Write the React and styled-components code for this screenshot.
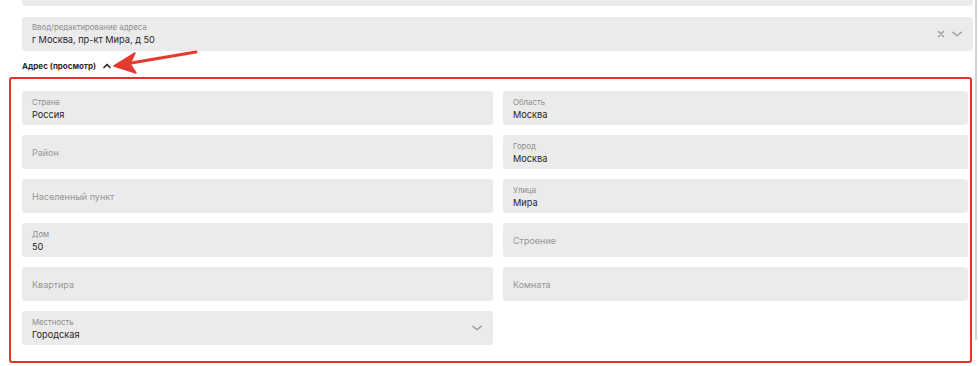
import React from 'react';
import styled, { createGlobalStyle } from 'styled-components';

const GlobalStyle = createGlobalStyle`
  html, body {
    margin: 0;
    padding: 0;
    background: #ffffff;
    font-family: Inter, "Noto Sans", "Liberation Sans", sans-serif;
  }
`;

const Page = styled.div`
  position: relative;
  display: flex;
  width: 979px;
  height: 366px;
  overflow: hidden;
  background: #ffffff;
`;

const Content = styled.div`
  width: 964px;
  padding-left: 9px;
  display: flex;
  flex-direction: column;
`;

const ScrollTrack = styled.div`
  width: 2px;
  height: 340px;
  margin-left: 2px;
  background: #d3d3d3;
`;

const TopStub = styled.div`
  height: 6px;
  margin-left: 13px;
  background: #ebebeb;
  border-radius: 0 0 3px 3px;
`;

const Field = styled.div`
  position: relative;
  box-sizing: border-box;
  height: 34px;
  padding: ${(p) => (p.$empty ? '0 10px' : '6px 10px 0')};
  background: #ebebeb;
  border-radius: 3px;
  display: flex;
  flex-direction: column;
  justify-content: ${(p) => (p.$empty ? 'center' : 'flex-start')};
`;

const AddressField = styled(Field)`
  margin: 11px 0 0 13px;
  padding-top: 5px;
`;

const FieldLabel = styled.span`
  font-size: 7.8px;
  line-height: 11px;
  color: #8d8d8d;
`;

const FieldValue = styled.span`
  font-size: 9.2px;
  line-height: 13px;
  color: #262626;
`;

const Placeholder = styled.span`
  font-size: 9px;
  color: #969696;
`;

const Actions = styled.div`
  position: absolute;
  right: 10px;
  top: 0;
  bottom: 0;
  display: flex;
  align-items: center;
  gap: 6px;
`;

const SectionTitle = styled.div`
  display: flex;
  align-items: center;
  gap: 6px;
  margin: 8px 0 0 13px;
  height: 14px;
  font-size: 8px;
  font-weight: 700;
  color: #2b2b2b;
`;

const Frame = styled.div`
  box-sizing: border-box;
  width: 963px;
  margin-top: 4px;
  padding: 12px 2px 16px 11px;
  border: 2px solid #e5322b;
  border-radius: 3px;
  display: grid;
  grid-template-columns: 471px 1fr;
  column-gap: 10px;
  row-gap: 10px;
`;

const ArrowOverlay = styled.svg`
  position: absolute;
  left: 0;
  top: 0;
  pointer-events: none;
`;

const Chevron = ({ up, color = '#9a9a9a', size = 10, width = 1.2 }) => (
  <svg width={size} height={size} viewBox="0 0 10 10" fill="none">
    <path
      d={up ? 'M2 6.5 L5 3.5 L8 6.5' : 'M1.5 3.5 L5 6.5 L8.5 3.5'}
      stroke={color}
      strokeWidth={width}
      strokeLinecap="round"
      strokeLinejoin="round"
    />
  </svg>
);

const Cross = () => (
  <svg width="8" height="8" viewBox="0 0 8 8" fill="none">
    <path d="M1.5 1.5 L6.5 6.5 M6.5 1.5 L1.5 6.5" stroke="#9a9a9a" strokeWidth="1.3" strokeLinecap="round" />
  </svg>
);

const fields = [
  { label: 'Страна', value: 'Россия' },
  { label: 'Область', value: 'Москва' },
  { label: 'Район' },
  { label: 'Город', value: 'Москва' },
  { label: 'Населенный пункт' },
  { label: 'Улица', value: 'Мира' },
  { label: 'Дом', value: '50' },
  { label: 'Строение' },
  { label: 'Квартира' },
  { label: 'Комната' },
  { label: 'Местность', value: 'Городская', select: true },
];

function AddressPart({ label, value, select }) {
  if (!value) {
    return (
      <Field $empty>
        <Placeholder>{label}</Placeholder>
      </Field>
    );
  }
  return (
    <Field>
      <FieldLabel>{label}</FieldLabel>
      <FieldValue>{value}</FieldValue>
      {select && (
        <Actions>
          <Chevron size={12} />
        </Actions>
      )}
    </Field>
  );
}

export default function App() {
  return (
    <>
      <GlobalStyle />
      <Page>
        <Content>
          <TopStub />
          <AddressField>
            <FieldLabel>Ввод/редактирование адреса</FieldLabel>
            <FieldValue>г Москва, пр-кт Мира, д 50</FieldValue>
            <Actions>
              <Cross />
              <Chevron size={12} />
            </Actions>
          </AddressField>
          <SectionTitle>
            Адрес (просмотр)
            <Chevron up color="#2b2b2b" size={10} width={1.7} />
          </SectionTitle>
          <Frame>
            {fields.map((f) => (
              <AddressPart key={f.label} {...f} />
            ))}
          </Frame>
        </Content>
        <ScrollTrack />
        <ArrowOverlay width="979" height="366" viewBox="0 0 979 366">
          <line x1="196" y1="52" x2="128" y2="63.5" stroke="#e53a2f" strokeWidth="3" strokeLinecap="round" />
          <path d="M114 66 L135 53 L130 64 L136 73 Z" fill="#e53a2f" stroke="#e53a2f" strokeWidth="1.5" strokeLinejoin="round" />
        </ArrowOverlay>
      </Page>
    </>
  );
}
